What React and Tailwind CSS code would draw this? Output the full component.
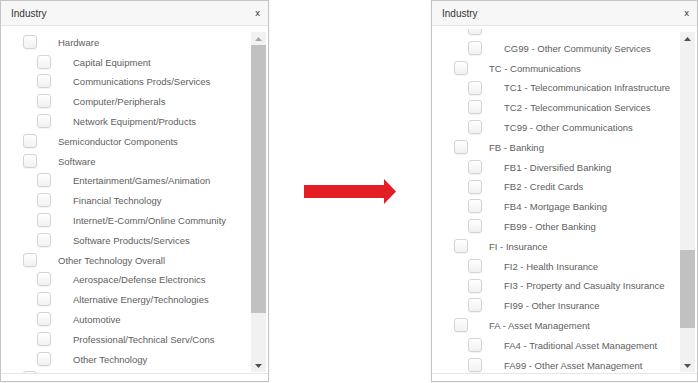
import React from "react";

const leftRows = [
  { level: 1, label: "Hardware" },
  { level: 2, label: "Capital Equipment" },
  { level: 2, label: "Communications Prods/Services" },
  { level: 2, label: "Computer/Peripherals" },
  { level: 2, label: "Network Equipment/Products" },
  { level: 1, label: "Semiconductor Components" },
  { level: 1, label: "Software" },
  { level: 2, label: "Entertainment/Games/Animation" },
  { level: 2, label: "Financial Technology" },
  { level: 2, label: "Internet/E-Comm/Online Community" },
  { level: 2, label: "Software Products/Services" },
  { level: 1, label: "Other Technology Overall" },
  { level: 2, label: "Aerospace/Defense Electronics" },
  { level: 2, label: "Alternative Energy/Technologies" },
  { level: 2, label: "Automotive" },
  { level: 2, label: "Professional/Technical Serv/Cons" },
  { level: 2, label: "Other Technology" },
  { level: 1, label: "" },
];

const rightRows = [
  { level: 2, label: "" },
  { level: 2, label: "CG99 - Other Community Services" },
  { level: 1, label: "TC - Communications" },
  { level: 2, label: "TC1 - Telecommunication Infrastructure" },
  { level: 2, label: "TC2 - Telecommunication Services" },
  { level: 2, label: "TC99 - Other Communications" },
  { level: 1, label: "FB - Banking" },
  { level: 2, label: "FB1 - Diversified Banking" },
  { level: 2, label: "FB2 - Credit Cards" },
  { level: 2, label: "FB4 - Mortgage Banking" },
  { level: 2, label: "FB99 - Other Banking" },
  { level: 1, label: "FI - Insurance" },
  { level: 2, label: "FI2 - Health Insurance" },
  { level: 2, label: "FI3 - Property and Casualty Insurance" },
  { level: 2, label: "FI99 - Other Insurance" },
  { level: 1, label: "FA - Asset Management" },
  { level: 2, label: "FA4 - Traditional Asset Management" },
  { level: 2, label: "FA99 - Other Asset Management" },
  { level: 1, label: "" },
];

const Row = ({ level, label }) => (
  <div
    className={
      "flex items-center h-[19.8px] " +
      (level === 1 ? "pl-[22px] gap-[21px]" : "pl-[36px] gap-[22px]")
    }
  >
    <span className="block w-[14px] h-[14px] -mt-[2px] shrink-0 rounded-[3px] border border-[#d4d4d4] bg-gradient-to-b from-white to-[#f1f1f1] shadow-[0_1px_1px_rgba(0,0,0,0.05)]" />
    <span className="text-[9.5px] text-[#606060] whitespace-nowrap">{label}</span>
  </div>
);

const Arrow = ({ up, faint }) => (
  <div className="h-[13px] flex items-center justify-center">
    <svg width="7" height="4" viewBox="0 0 7 4">
      <polygon
        points={up ? "0,4 7,4 3.5,0" : "0,0 7,0 3.5,4"}
        fill={faint ? "#a8a8a8" : "#505050"}
      />
    </svg>
  </div>
);

const Panel = ({ rows, offset, thumbTop, thumbHeight, atTop, width }) => (
  <div className={"h-[382px] flex flex-col border border-[#c4c4c4] bg-white shadow-[0_1px_2px_rgba(0,0,0,0.08)] " + width}>
    <div className="h-[25px] shrink-0 flex items-center justify-between pl-[10px] pr-[8px] bg-[#f7f7f7] border-b border-[#e6e6e6]">
      <span className="text-[10px] text-[#333]">Industry</span>
      <span className="text-[9.5px] text-[#333]">x</span>
    </div>
    <div className="flex-1 flex min-h-0 pt-[3px]">
      <div className="flex-1 overflow-hidden">
        <div className={offset}>
          {rows.map((r, i) => (
            <Row key={i} {...r} />
          ))}
        </div>
      </div>
      <div className="w-[15px] mr-[2px] mt-[3px] mb-[1px] flex flex-col bg-[#f1f1f1]">
        <Arrow up faint={atTop} />
        <div className="flex-1">
          <div className={"bg-[#c1c1c1] " + thumbTop + " " + thumbHeight} />
        </div>
        <Arrow />
      </div>
    </div>
    <div className="h-[8px] shrink-0 border-t border-[#e6e6e6]" />
  </div>
);

export default function App() {
  return (
    <div
      className="w-[698px] h-[383px] bg-white flex items-start overflow-hidden"
      style={{ fontFamily: '"Liberation Sans", Arial, sans-serif' }}
    >
      <Panel
        rows={leftRows}
        offset="pt-[4px]"
        thumbTop="mt-0"
        thumbHeight="h-[268px]"
        atTop
        width="w-[269px]"
      />
      <div className="flex-1 h-[382px] flex items-center justify-center">
        <svg width="92" height="25" viewBox="0 0 92 25">
          <polygon points="0,6 80,6 80,0 92,12.5 80,25 80,19 0,19" fill="#e31e24" />
        </svg>
      </div>
      <Panel
        rows={rightRows}
        offset="-mt-[9.7px]"
        thumbTop="mt-[205px]"
        thumbHeight="h-[78px]"
        width="w-[267px]"
      />
    </div>
  );
}
